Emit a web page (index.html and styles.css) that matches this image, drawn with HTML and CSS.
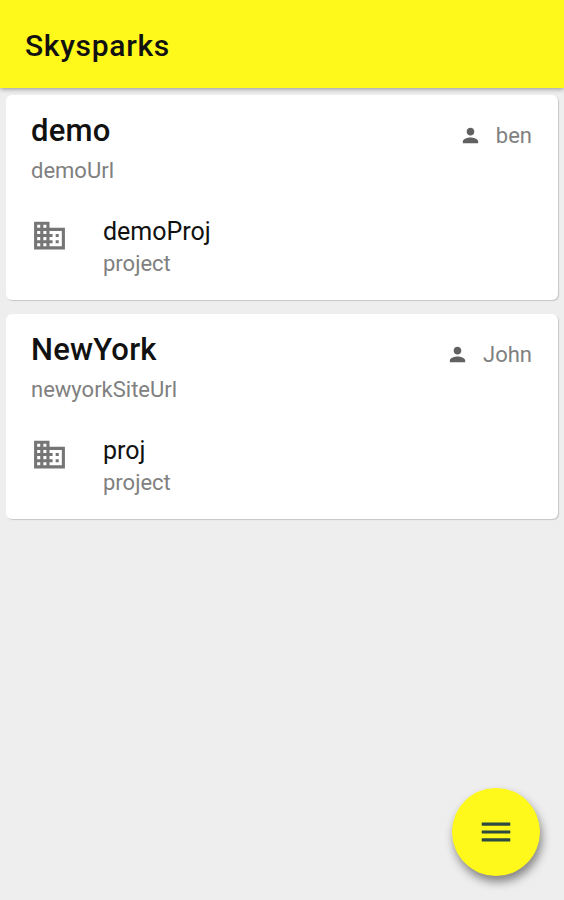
FILE: index.html
```html
<!DOCTYPE html>
<html lang="en">
<head>
    <meta charset="UTF-8">
    <meta name="viewport" content="width=device-width, initial-scale=1.0">
    <title>Skysparks</title>
    <link rel="stylesheet" href="styles.css">
</head>
<body>
    <header class="toolbar">
        <h1>Skysparks</h1>
    </header>

    <main class="cards">
        <section class="card">
            <div class="card-header">
                <div class="site">
                    <h2>demo</h2>
                    <p>demoUrl</p>
                </div>
                <div class="user">
                    <svg viewBox="0 0 24 24"><path d="M12 12c2.21 0 4-1.79 4-4s-1.79-4-4-4-4 1.79-4 4 1.79 4 4 4zm0 2c-2.67 0-8 1.34-8 4v2h16v-2c0-2.66-5.33-4-8-4z"/></svg>
                    <span>ben</span>
                </div>
            </div>
            <div class="project">
                <svg viewBox="0 0 24 24"><path d="M12 7V3H2v18h20V7H12zM6 19H4v-2h2v2zm0-4H4v-2h2v2zm0-4H4V9h2v2zm0-4H4V5h2v2zm4 12H8v-2h2v2zm0-4H8v-2h2v2zm0-4H8V9h2v2zm0-4H8V5h2v2zm10 12h-8v-2h2v-2h-2v-2h2v-2h-2V9h8v10zm-2-8h-2v2h2v-2zm0 4h-2v2h2v-2z"/></svg>
                <div class="project-text">
                    <h3>demoProj</h3>
                    <p>project</p>
                </div>
            </div>
        </section>

        <section class="card">
            <div class="card-header">
                <div class="site">
                    <h2>NewYork</h2>
                    <p>newyorkSiteUrl</p>
                </div>
                <div class="user">
                    <svg viewBox="0 0 24 24"><path d="M12 12c2.21 0 4-1.79 4-4s-1.79-4-4-4-4 1.79-4 4 1.79 4 4 4zm0 2c-2.67 0-8 1.34-8 4v2h16v-2c0-2.66-5.33-4-8-4z"/></svg>
                    <span>John</span>
                </div>
            </div>
            <div class="project">
                <svg viewBox="0 0 24 24"><path d="M12 7V3H2v18h20V7H12zM6 19H4v-2h2v2zm0-4H4v-2h2v2zm0-4H4V9h2v2zm0-4H4V5h2v2zm4 12H8v-2h2v2zm0-4H8v-2h2v2zm0-4H8V9h2v2zm0-4H8V5h2v2zm10 12h-8v-2h2v-2h-2v-2h2v-2h-2V9h8v10zm-2-8h-2v2h2v-2zm0 4h-2v2h2v-2z"/></svg>
                <div class="project-text">
                    <h3>proj</h3>
                    <p>project</p>
                </div>
            </div>
        </section>
    </main>

    <button class="fab" aria-label="Menu">
        <svg viewBox="0 0 24 24"><path d="M3 18h18v-2H3v2zm0-5h18v-2H3v2zm0-7v2h18V6H3z"/></svg>
    </button>
</body>
</html>
```
FILE: styles.css
```css
* {
    margin: 0;
    padding: 0;
    box-sizing: border-box;
}

body {
    font-family: Roboto, sans-serif;
    background: #eeeeee;
    color: #111111;
    min-height: 100vh;
}

.toolbar {
    height: 88px;
    padding: 2px 25px 0;
    display: flex;
    align-items: center;
    background: #fff81b;
    box-shadow: 0 1px 5px rgba(0, 0, 0, 0.4);
}

.toolbar h1 {
    font-size: 30px;
    font-weight: 500;
    letter-spacing: 0.7px;
}

.cards {
    display: flex;
    flex-direction: column;
    gap: 14px;
    padding: 7px 6px 0;
}

.card {
    height: 205px;
    padding: 16px 26px 0 25px;
    background: #ffffff;
    border-radius: 6px;
    box-shadow: 1px 1px 1px rgba(0, 0, 0, 0.17);
}

.card-header {
    display: flex;
    justify-content: space-between;
}

.site h2 {
    font-size: 31px;
    font-weight: 500;
    line-height: 40px;
    letter-spacing: 0.2px;
}

.site p {
    font-size: 22px;
    line-height: 40px;
    color: #808080;
}

.user {
    display: flex;
    align-items: center;
    gap: 14px;
    height: 48px;
    font-size: 22px;
    color: #808080;
}

.user svg {
    width: 23px;
    height: 23px;
    fill: #616161;
}

.project {
    display: flex;
    gap: 35px;
    margin-top: 25px;
}

.project svg {
    width: 37px;
    height: 37px;
    margin-top: 1px;
    fill: #757575;
}

.project h3 {
    font-size: 25px;
    font-weight: 400;
    line-height: 32px;
}

.project p {
    font-size: 22px;
    line-height: 32px;
    color: #808080;
}

.fab {
    position: fixed;
    right: 24px;
    bottom: 24px;
    width: 88px;
    height: 88px;
    display: flex;
    align-items: center;
    justify-content: center;
    border: none;
    border-radius: 50%;
    background: #fff81b;
    box-shadow: 2px 6px 10px rgba(0, 0, 0, 0.45);
}

.fab svg {
    width: 38px;
    height: 38px;
    fill: #2c4a40;
}
```
